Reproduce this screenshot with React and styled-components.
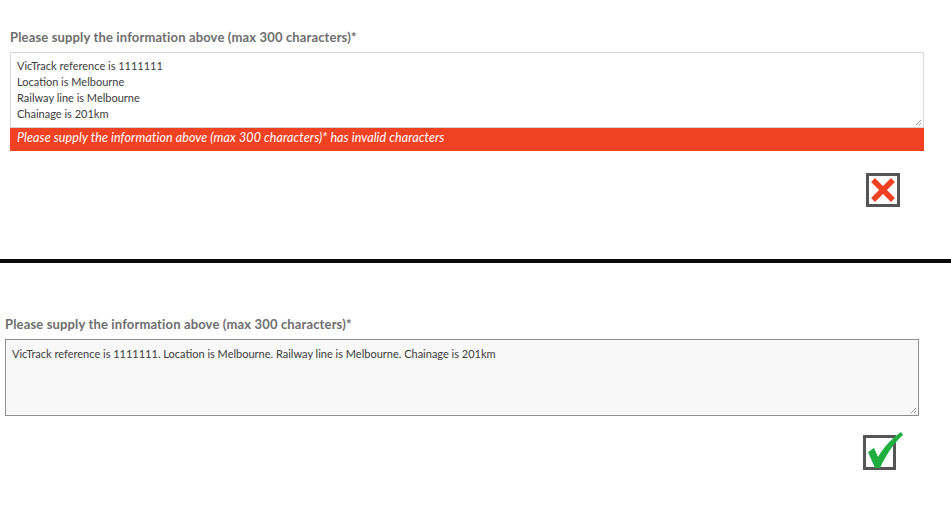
import React from 'react';
import styled, { createGlobalStyle } from 'styled-components';

const GlobalStyle = createGlobalStyle`
  html, body {
    margin: 0;
    padding: 0;
    background: #ffffff;
  }
  body {
    font-family: Lato, "Open Sans", Arial, sans-serif;
  }
`;

const Page = styled.div`
  width: 951px;
  height: 525px;
  overflow: hidden;
  display: flex;
  flex-direction: column;
`;

const Panel = styled.section`
  display: flex;
  flex-direction: column;
  padding: ${(p) => p.$pad};
  height: ${(p) => p.$height}px;
  box-sizing: border-box;
`;

const Divider = styled.div`
  height: 4px;
  background: #0a0a0a;
  flex-shrink: 0;
`;

const Label = styled.div`
  font-size: 13px;
  font-weight: 700;
  letter-spacing: 0.15px;
  color: #6e6e6e;
  line-height: 14px;
  margin-bottom: ${(p) => p.$gap}px;
`;

const Box = styled.div`
  width: 914px;
  box-sizing: border-box;
`;

const TextBox = styled.div`
  position: relative;
  height: ${(p) => p.$height}px;
  box-sizing: border-box;
  border: 1px solid ${(p) => (p.$filled ? '#8f8f8f' : '#d6d6d6')};
  background: ${(p) => (p.$filled ? '#f8f8f8' : '#ffffff')};
  padding: ${(p) => (p.$filled ? '6px 6px' : '5px 6px')};
  font-size: 11px;
  line-height: 16px;
  color: #3c3c3c;
`;

const Grip = styled.svg`
  position: absolute;
  right: 1px;
  bottom: 1px;
`;

const ErrorBar = styled.div`
  height: 23px;
  background: #f04123;
  color: #ffffff;
  font-size: 12.5px;
  letter-spacing: 0.1px;
  font-style: italic;
  line-height: 19px;
  padding: 0 7px;
  box-sizing: border-box;
`;

const IconRow = styled.div`
  display: flex;
  padding-left: ${(p) => p.$left}px;
  margin-top: ${(p) => p.$top}px;
`;

const ResizeGrip = () => (
  <Grip width="7" height="7" viewBox="0 0 7 7">
    <path d="M6 1 L1 6 M6 4 L4 6" stroke="#9a9a9a" strokeWidth="1" />
  </Grip>
);

const CrossIcon = () => (
  <svg width="34" height="34" viewBox="0 0 34 34">
    <rect x="1.5" y="1.5" width="31" height="31" fill="#ffffff" stroke="#555555" strokeWidth="3" />
    <path d="M9 9 L25 25 M25 9 L9 25" stroke="#f04123" strokeWidth="5.5" strokeLinecap="square" />
  </svg>
);

const CheckIcon = () => (
  <svg width="40" height="40" viewBox="0 0 40 40">
    <rect x="1.5" y="5.5" width="30" height="32" fill="#ffffff" stroke="#555555" strokeWidth="3" />
    <path
      d="M5 21 L11 17 L15 26 C21 16 29 7 38 1 L40 4 C32 11 24 22 17 37 L12 37 Z"
      fill="#1fae3f"
    />
  </svg>
);

export default function App() {
  return (
    <Page>
      <GlobalStyle />
      <Panel $pad="30px 0 0 10px" $height={259}>
        <Label $gap={8}>Please supply the information above (max 300 characters)*</Label>
        <Box>
          <TextBox $height={76}>
            VicTrack reference is 1111111
            <br />
            Location is Melbourne
            <br />
            Railway line is Melbourne
            <br />
            Chainage is 201km
            <ResizeGrip />
          </TextBox>
          <ErrorBar>Please supply the information above (max 300 characters)* has invalid characters</ErrorBar>
        </Box>
        <IconRow $left={856} $top={22}>
          <CrossIcon />
        </IconRow>
      </Panel>
      <Divider />
      <Panel $pad="54px 0 0 5px" $height={262}>
        <Label $gap={8}>Please supply the information above (max 300 characters)*</Label>
        <Box>
          <TextBox $height={77} $filled>
            VicTrack reference is 1111111. Location is Melbourne. Railway line is Melbourne. Chainage is 201km
            <ResizeGrip />
          </TextBox>
        </Box>
        <IconRow $left={858} $top={15}>
          <CheckIcon />
        </IconRow>
      </Panel>
    </Page>
  );
}
